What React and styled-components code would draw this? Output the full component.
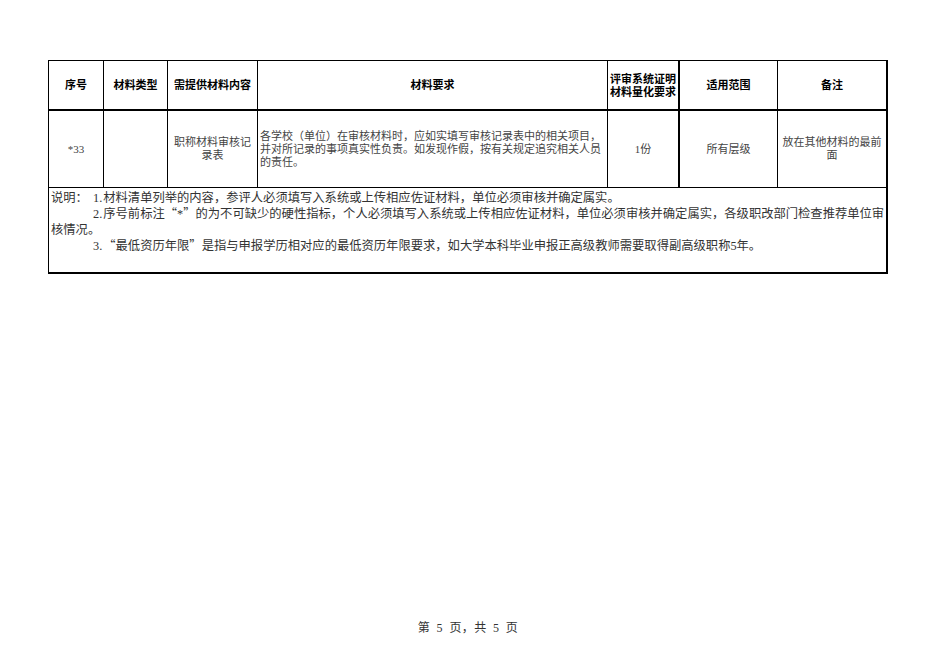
import React from "react";
import styled, { createGlobalStyle } from "styled-components";

const Global = createGlobalStyle`
  html, body { margin: 0; padding: 0; background: #fff; }
  body { font-family: "Liberation Serif", "Noto Sans CJK SC", serif; }
`;

const Page = styled.div`
  width: 936px;
  height: 662px;
  box-sizing: border-box;
  padding: 60px 0 0 48px;
  display: flex;
  flex-direction: column;
`;

const Sheet = styled.div`
  display: grid;
  grid-template-columns: 55px 64px 90px 350px 72px 98px 110px;
  grid-template-rows: 50px 77px 86px;
  border-top: 1px solid #000;
  border-left: 1px solid #000;
  width: max-content;
`;

const Cell = styled.div`
  box-sizing: border-box;
  border-right: ${(p) => (p.$thickRight ? 2 : 1)}px solid #000;
  border-bottom: ${(p) => (p.$thickBottom ? 2 : 1)}px solid #000;
  display: flex;
  align-items: center;
  justify-content: ${(p) => (p.$left ? "flex-start" : "center")};
  text-align: ${(p) => (p.$left ? "left" : "center")};
  padding: 0 2px;
  white-space: nowrap;
`;

const HeadCell = styled(Cell)`
  font-family: "Noto Sans CJK SC", sans-serif;
  font-weight: 700;
  font-size: 11px;
  line-height: 13.5px;
  color: #000;
`;

const DataCell = styled(Cell)`
  font-family: "Liberation Serif", "Noto Sans CJK SC", serif;
  font-size: 11px;
  line-height: 13px;
  color: #444;
`;

const NoteCell = styled.div`
  grid-column: 1 / -1;
  box-sizing: border-box;
  border-right: 2px solid #000;
  border-bottom: 2px solid #000;
  padding: 3px 0 0 2px;
  font-family: "Liberation Serif", "Noto Sans CJK SC", serif;
  font-size: 12.3px;
  line-height: 15.3px;
  color: #333;
  white-space: nowrap;
`;

const NoteLine = styled.div`
  text-indent: ${(p) => (p.$indent ? "42px" : "0")};
`;

const Num = styled.span`
  margin-right: 1px;
`;

const Quote = styled.span`
  font-family: "Noto Sans CJK SC", sans-serif;
`;

const Label = styled.span`
  display: inline-block;
  width: 42px;
`;

const Footer = styled.div`
  margin-top: 347px;
  margin-left: -48px;
  width: 936px;
  text-align: center;
  font-family: "Liberation Serif", "Noto Sans CJK SC", serif;
  font-size: 12px;
  letter-spacing: 0.4px;
  word-spacing: 3px;
  line-height: 14px;
  color: #333;
  white-space: pre;
`;

export default function App() {
  return (
    <>
      <Global />
      <Page>
        <Sheet>
          <HeadCell $thickBottom>序号</HeadCell>
          <HeadCell $thickBottom>材料类型</HeadCell>
          <HeadCell $thickBottom>需提供材料内容</HeadCell>
          <HeadCell $thickBottom>材料要求</HeadCell>
          <HeadCell $thickBottom $thickRight>
            评审系统证明
            <br />
            材料量化要求
          </HeadCell>
          <HeadCell $thickBottom>适用范围</HeadCell>
          <HeadCell $thickBottom $thickRight>备注</HeadCell>

          <DataCell>*33</DataCell>
          <DataCell />
          <DataCell>
            职称材料审核记
            <br />
            录表
          </DataCell>
          <DataCell $left>
            <div>
              各学校（单位）在审核材料时，应如实填写审核记录表中的相关项目，
              <br />
              并对所记录的事项真实性负责。如发现作假，按有关规定追究相关人员
              <br />
              的责任。
            </div>
          </DataCell>
          <DataCell $thickRight>1份</DataCell>
          <DataCell>所有层级</DataCell>
          <DataCell $thickRight>
            放在其他材料的最前
            <br />
            面
          </DataCell>

          <NoteCell>
            <NoteLine>
              <Label>说明：</Label>
              <Num>1.</Num>材料清单列举的内容，参评人必须填写入系统或上传相应佐证材料，单位必须审核并确定属实。
            </NoteLine>
            <NoteLine $indent>
              <Num>2.</Num>序号前标注<Quote>“</Quote>*<Quote>”</Quote>的为不可缺少的硬性指标，个人必须填写入系统或上传相应佐证材料，单位必须审核并确定属实，各级职改部门检查推荐单位审
            </NoteLine>
            <NoteLine>核情况。</NoteLine>
            <NoteLine $indent>
              <Num>3.</Num>
              <Quote>“</Quote>最低资历年限<Quote>”</Quote>是指与申报学历相对应的最低资历年限要求，如大学本科毕业申报正高级教师需要取得副高级职称5年。
            </NoteLine>
          </NoteCell>
        </Sheet>
        <Footer>第 5 页，共 5 页</Footer>
      </Page>
    </>
  );
}
